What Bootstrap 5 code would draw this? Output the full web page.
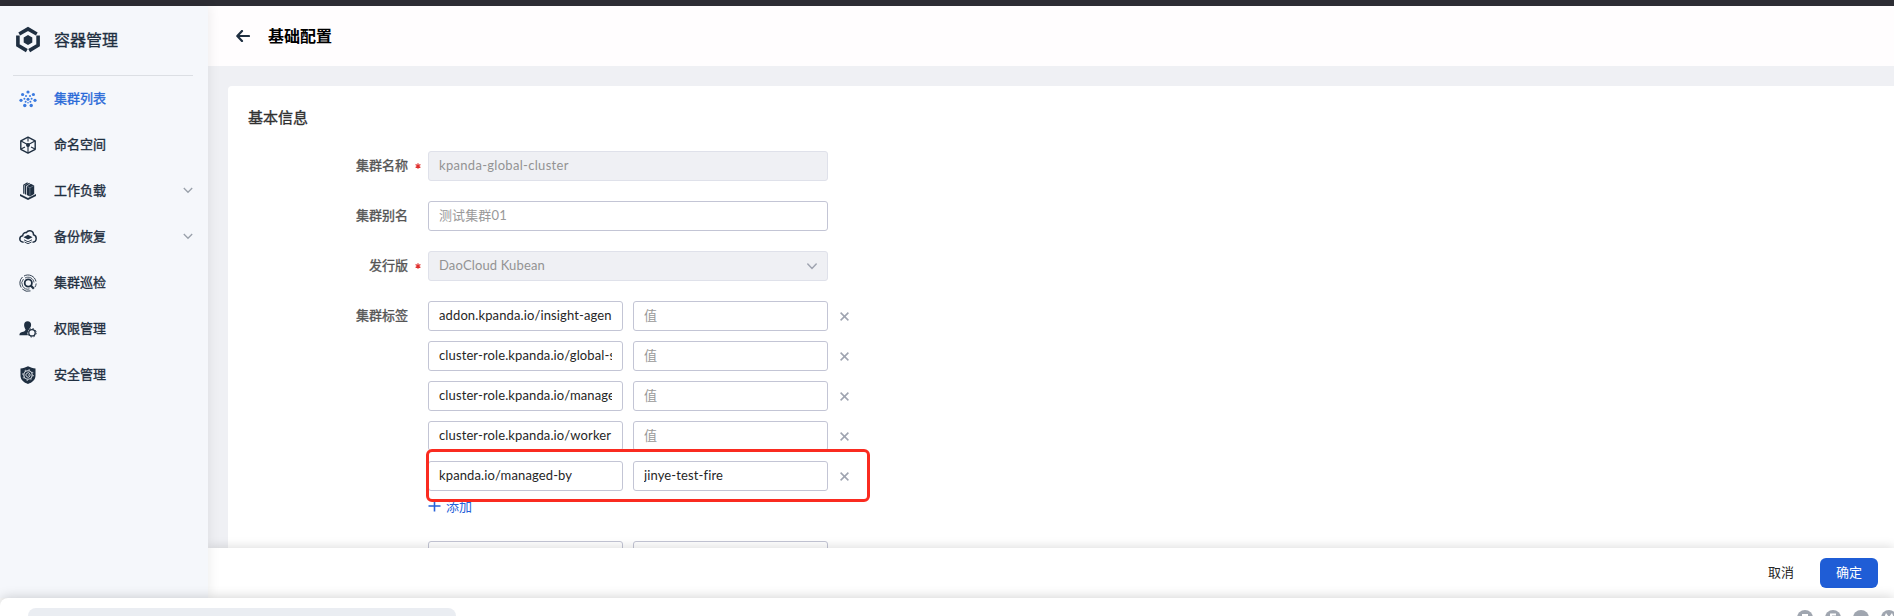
<!DOCTYPE html>
<html lang="zh-CN">
<head>
<meta charset="utf-8">
<title>基础配置</title>
<link href="https://cdn.jsdelivr.net/npm/bootstrap@5.3.0/dist/css/bootstrap.min.css" rel="stylesheet">
<style>
body{height:616px;font-family:Lato,"Noto Sans CJK SC",sans-serif;font-size:13px;line-height:20px;color:#262626;background:#fff}
.topline{height:6px;background:#2d2d34}
.side{width:208px;background:#f5f7fb;color:#1f2f41;z-index:3;box-shadow:0 0 12px rgba(0,0,0,.09)}
.brandrow{height:69px;padding:0 0 1px 16px;gap:14px;font-size:16px;-webkit-text-stroke:.3px}
.rule{height:1px;background:#dcdfe4;margin:0 15px 0 13px}
.side .nav-link{height:46px;padding:0 15px 0 19px;color:#1f2f41;gap:17px;-webkit-text-stroke:.35px}
.side .nav{margin-top:-1px}
.side .nav-link.active{color:#2a6ad8}
.side svg.ic{width:18px;height:18px;flex:none;position:relative;top:1px}
.head{height:60px;background:#fffdfe;padding-left:28px;gap:18px}
.head h1{font-size:16px;font-weight:700;color:#000;line-height:24px;padding-bottom:1px}
.work{background:#eff0f4;padding:20px 0 0 20px;min-height:0}
.panel{background:#fff;border-radius:4px 0 0 0;height:100%;padding:20px 0 0 20px}
.panel h2{font-size:15px;font-weight:400;line-height:22px;color:#303030;margin-bottom:23px;-webkit-text-stroke:.35px}
.line{margin-bottom:20px}
.lab{width:160px;height:30px;color:#555;text-align:right;line-height:29px;-webkit-text-stroke:.35px}
.star{width:20px;display:flex;align-items:center;justify-content:center}
.panel .form-control{height:30px;padding:0 10px 2px;font-size:13px;line-height:26px;border:1px solid #c3c5d5;border-radius:3px;color:#262626;letter-spacing:.12px;box-shadow:none}
.panel .form-control::placeholder{color:#999}
.panel .form-control:disabled{background:#eff0f4;border-color:#dfe1ea;color:#939393;letter-spacing:.3px}
.panel .form-control.distro{letter-spacing:.14px}
.w400{width:400px}
.w195{width:195px!important}
.pick{right:11px;top:12px}
.pairs,.pair{gap:10px}
.cross{width:9px;height:9px;margin-left:2px;stroke:#9fa4b0;stroke-width:1.5}
.frame{left:-2px;top:-12px;width:444px;height:53px;border:3px solid #fa2b20;border-radius:6px;z-index:2}
.addrow{margin-top:-10px}
.add{height:30px;color:#2661d8;gap:5px;padding-bottom:1px}
.acts{height:50px;background:#fff;padding-right:16px;gap:26px;z-index:2;box-shadow:0 -1px 10px rgba(0,0,0,.14)}
.acts .btn{font-size:13px;height:30px;line-height:18px;padding:0 16px 2px;border:0}
.acts .btn-primary{background:#1f5dd6;border-radius:6px}
.acts .btn-link{color:#262626;padding:0 0 2px}
.under{height:18px;background:#fff;border-radius:8px 0 0 0;z-index:5;padding-left:28px;box-shadow:0 -1px 12px rgba(0,0,0,.17)}
.search{width:428px;height:30px;margin-top:10px;border-radius:8px;background:#eaedf2}
.dots{margin-top:12px;gap:12px;margin-right:-3px}
</style>
</head>
<body class="d-flex flex-column overflow-hidden">
<svg class="d-none"><symbol id="x" viewBox="0 0 9 9"><path d="M.6.6l7.800 7.800M8.400.6.6 8.400"/></symbol><symbol id="req" viewBox="0 0 6 6"><path d="M3 .3v5.400M.6 1.600l4.800 2.800M5.400 1.600.6 4.400" stroke="#e0312f" stroke-width="1.200"/></symbol></svg>
<div class="topline flex-shrink-0"></div>
<div class="d-flex flex-grow-1" style="min-height:0">
  <aside class="side position-relative flex-shrink-0">
    <div class="brandrow d-flex align-items-center">
      <svg width="24" height="28" viewBox="0 0 24 28" fill="none" stroke="#1f2f41" stroke-width="3.600"><path d="M3.200 8 12 2.900 20.800 8"/><path d="M1.900 9.600v9.700l8.900 5.300M22.100 9.600v9.700l-8.900 5.300"/><path d="M12 9.100l4.300 2.400v5L12 18.900l-4.300-2.400v-5z" fill="#1f2f41" stroke="none"/></svg>
      <span>容器管理</span>
    </div>
    <div class="rule"></div>
    <nav class="nav flex-column flex-nowrap">
      <a class="nav-link active d-flex align-items-center" href="#">
        <svg class="ic" viewBox="0 0 18 18" fill="#3a7ae0"><circle cx="9" cy="2" r="1.600"/><circle cx="3.600" cy="4.500" r="1.600"/><circle cx="14.400" cy="4.500" r="1.600"/><circle cx="2" cy="10.300" r="1.600"/><circle cx="16" cy="10.300" r="1.600"/><circle cx="5.800" cy="15.500" r="1.700"/><circle cx="12.200" cy="15.500" r="1.700"/><circle cx="9" cy="9.200" r="1.500"/><circle cx="7" cy="6" r="1"/><circle cx="11" cy="6" r="1"/><circle cx="5.400" cy="8.800" r="1"/><circle cx="12.600" cy="8.800" r="1"/><circle cx="6.600" cy="11.800" r="1"/><circle cx="11.400" cy="11.800" r="1"/><circle cx="9" cy="12.800" r=".8"/></svg>
        <span>集群列表</span></a>
      <a class="nav-link d-flex align-items-center" href="#">
        <svg class="ic" viewBox="0 0 18 18" fill="none" stroke="#1f2f41" stroke-width="1.400" stroke-linejoin="round"><path d="M9 1.200l7.200 3.700v8.400L9 17.100l-7.200-3.800V4.900z"/><path d="M2 5l7 3.800L16 5M9 9v8M9 1.500v4M2 13l4-2M16 13l-4-2" stroke-width="1.100"/><circle cx="9" cy="9" r="2" fill="#1f2f41" stroke="none"/></svg>
        <span>命名空间</span></a>
      <a class="nav-link d-flex align-items-center" href="#">
        <svg class="ic" viewBox="0 0 18 18" fill="#1f2f41"><path d="M7.800 4.200 11.800 1.700l3.400 1.700v8.700l-4.200 2.300-3.200-1.500z"/><path d="M6.500 12.600V3.700L10.600 1.200M4.800 11.800V3.100L8.600.8" fill="none" stroke="#1f2f41" stroke-width="1.200"/><path d="M10.900 13.800V5.800l3.900-2.100M10.900 5.800 8 4.400" fill="none" stroke="#8b96a3" stroke-width=".6"/><path d="M1 12 9 16l8-4v2l-8 4-8-4z"/></svg>
        <span>工作负载</span>
        <svg class="ms-auto" width="10" height="7" viewBox="0 0 10 7" fill="none" stroke="#9aa1ab" stroke-width="1.300"><path d="M.8 1 5 5.300 9.200 1"/></svg></a>
      <a class="nav-link d-flex align-items-center" href="#">
        <svg class="ic" viewBox="0 0 18 18" fill="none" stroke="#1f2f41" stroke-width="1.500"><path d="M4.600 14.200C2.300 14.200.8 12.800.8 11c0-1.700 1.200-3 2.900-3.300C3.800 5.500 5.500 4.400 7.300 4.600 8.200 3.100 9.500 2.600 11 2.700c2.200.2 3.500 1.800 3.500 4.100 1.600.5 2.700 1.800 2.700 3.700 0 2.200-1.400 3.600-3.700 3.700"/><path d="M9 6.800l4.500 2.400L9 11.600 4.500 9.200z" fill="#1f2f41" stroke="none"/><path d="M5 11.800l4 2 4-2M5.500 14l3.500 1.700 3.500-1.700" stroke-width=".9"/></svg>
        <span>备份恢复</span>
        <svg class="ms-auto" width="10" height="7" viewBox="0 0 10 7" fill="none" stroke="#9aa1ab" stroke-width="1.300"><path d="M.8 1 5 5.300 9.200 1"/></svg></a>
      <a class="nav-link d-flex align-items-center" href="#">
        <svg class="ic" viewBox="0 0 18 18" fill="none" stroke="#1f2f41"><circle cx="9.300" cy="9" r="3.600" stroke-width="1.800"/><path d="M11.800 11.600l3 3.200" stroke-width="2.200"/><path d="M5 2A8.200 8.200 0 0 1 17 7.500M17.200 9.500a8 8 0 0 1-1.300 3.700M11.500 16.900A8.200 8.200 0 0 1 3.300 15M2.200 13.500A8.200 8.200 0 0 1 3.500 3" stroke-width=".9"/><path d="M6 4A6 6 0 0 1 15 8.500M10.500 14.900A6 6 0 0 1 4.500 5" stroke-width=".8"/></svg>
        <span>集群巡检</span></a>
      <a class="nav-link d-flex align-items-center" href="#">
        <svg class="ic" viewBox="0 0 18 18" fill="#1f2f41"><path d="M8.600 1.200c2.200 0 3.500 1.500 3.500 3.500 0 1.600-.7 3-1.500 3.800l-1.600 3.300c-.6 1-.6 2.300-.2 3.500H.4c0-2.100.9-2.800 2.700-3.300 1.800-.5 3.200-.8 3.500-2.500-.9-1.300-1.500-2.900-1.500-4.400 0-2.400 1.300-3.900 3.500-3.900z"/><circle cx="13" cy="12.800" r="4.300" fill="#f5f7fb"/><circle cx="13" cy="12.800" r="3.200" fill="none" stroke="#1f2f41" stroke-width="1.300"/><circle cx="13" cy="12.800" r="4.200" fill="none" stroke="#1f2f41" stroke-width="1" stroke-dasharray="1.600 1.698"/></svg>
        <span>权限管理</span></a>
      <a class="nav-link d-flex align-items-center" href="#">
        <svg class="ic" viewBox="0 0 18 18" fill="#1f2f41"><path d="M9 .3C11.400 1.500 14 2.200 16.500 2.500v7c0 4.300-3.300 7.100-7.500 8.400-4.200-1.300-7.500-4.100-7.500-8.400v-7C4 2.200 6.600 1.500 9 .3z"/><circle cx="9" cy="9" r="4.200" fill="none" stroke="#e5e9ef" stroke-width="1.100"/><circle cx="9" cy="9" r="5.300" fill="none" stroke="#e5e9ef" stroke-width="1" stroke-dasharray="1.300 2.863"/><path d="M11 7.800A2.200 2.200 0 1 0 11 10.200M9 9h3" fill="none" stroke="#e5e9ef" stroke-width=".9"/></svg>
        <span>安全管理</span></a>
    </nav>
  </aside>
  <div class="d-flex flex-column flex-grow-1" style="min-width:0">
    <header class="head d-flex align-items-center flex-shrink-0">
      <svg width="14" height="12" viewBox="0 0 14 12" fill="none" stroke="#1f2f41" stroke-width="2.200" stroke-linecap="round" stroke-linejoin="round"><path d="M6 1 1.300 6 6 11M1.500 6H13"/></svg>
      <h1 class="mb-0">基础配置</h1>
    </header>
    <main class="work flex-grow-1 overflow-hidden">
      <section class="panel">
        <h2>基本信息</h2>
        <div class="line d-flex"><label class="lab">集群名称</label><span class="star"><svg width="6" height="6"><use href="#req"/></svg></span><input class="form-control w400" value="kpanda-global-cluster" disabled></div>
        <div class="line d-flex"><label class="lab">集群别名</label><span class="star"></span><input class="form-control w400" placeholder="测试集群01"></div>
        <div class="line d-flex"><label class="lab">发行版</label><span class="star"><svg width="6" height="6"><use href="#req"/></svg></span>
          <div class="position-relative w400"><input class="form-control distro" value="DaoCloud Kubean" disabled><svg class="pick position-absolute" width="10" height="7" viewBox="0 0 10 7" fill="none" stroke="#9fa4b0" stroke-width="1.500" stroke-linecap="round"><path d="M.8 1 5 5.400 9.200 1"/></svg></div></div>
        <div class="d-flex"><label class="lab">集群标签</label><span class="star"></span>
          <div class="pairs d-flex flex-column">
            <div class="pair d-flex align-items-center"><input class="form-control w195" value="addon.kpanda.io/insight-agen"><input class="form-control w195" placeholder="值"><svg class="cross"><use href="#x"/></svg></div>
            <div class="pair d-flex align-items-center"><input class="form-control w195" value="cluster-role.kpanda.io/global-service"><input class="form-control w195" placeholder="值"><svg class="cross"><use href="#x"/></svg></div>
            <div class="pair d-flex align-items-center"><input class="form-control w195" value="cluster-role.kpanda.io/management"><input class="form-control w195" placeholder="值"><svg class="cross"><use href="#x"/></svg></div>
            <div class="pair d-flex align-items-center"><input class="form-control w195" value="cluster-role.kpanda.io/worker"><input class="form-control w195" placeholder="值"><svg class="cross"><use href="#x"/></svg></div>
            <div class="pair d-flex align-items-center position-relative"><input class="form-control w195" value="kpanda.io/managed-by"><input class="form-control w195" value="jinye-test-fire"><svg class="cross"><use href="#x"/></svg><span class="frame position-absolute"></span></div>
            <div class="addrow"><a class="add d-flex align-items-center text-decoration-none" href="#"><svg width="13" height="12" viewBox="0 0 13 12" stroke="#2661d8" stroke-width="1.600"><path d="M6.500 .5v11M.5 6h12"/></svg>添加</a></div>
            <div class="pair d-flex mt-2 pt-1" style="margin-top:10px!important;padding:0!important"><input class="form-control w195"><input class="form-control w195"></div>
          </div>
        </div>
      </section>
    </main>
    <footer class="acts d-flex align-items-center justify-content-end flex-shrink-0 position-relative">
      <button class="btn btn-link text-decoration-none">取消</button><button class="btn btn-primary">确定</button>
    </footer>
  </div>
</div>
<div class="under d-flex flex-shrink-0 position-relative">
  <div class="search"></div>
  <div class="dots d-flex ms-auto">
    <svg width="16" height="16"><circle cx="8" cy="8" r="8" fill="#a0a6b0"/><path d="M5 4h6v5H5z" fill="#fff"/></svg>
    <svg width="16" height="16"><circle cx="8" cy="8" r="8" fill="#a0a6b0"/><path d="M6 8V4.500h5" stroke="#fff" stroke-width="2" fill="none"/></svg>
    <svg width="16" height="16"><circle cx="8" cy="8" r="8" fill="#a0a6b0"/></svg>
    <svg width="16" height="16"><circle cx="8" cy="8" r="8" fill="#a0a6b0"/><path d="M3 8l2-5 3 4 3-4 2 5" fill="#fff"/></svg>
  </div>
</div>
<script src="https://cdn.jsdelivr.net/npm/bootstrap@5.3.0/dist/js/bootstrap.bundle.min.js"></script>
</body>
</html>
